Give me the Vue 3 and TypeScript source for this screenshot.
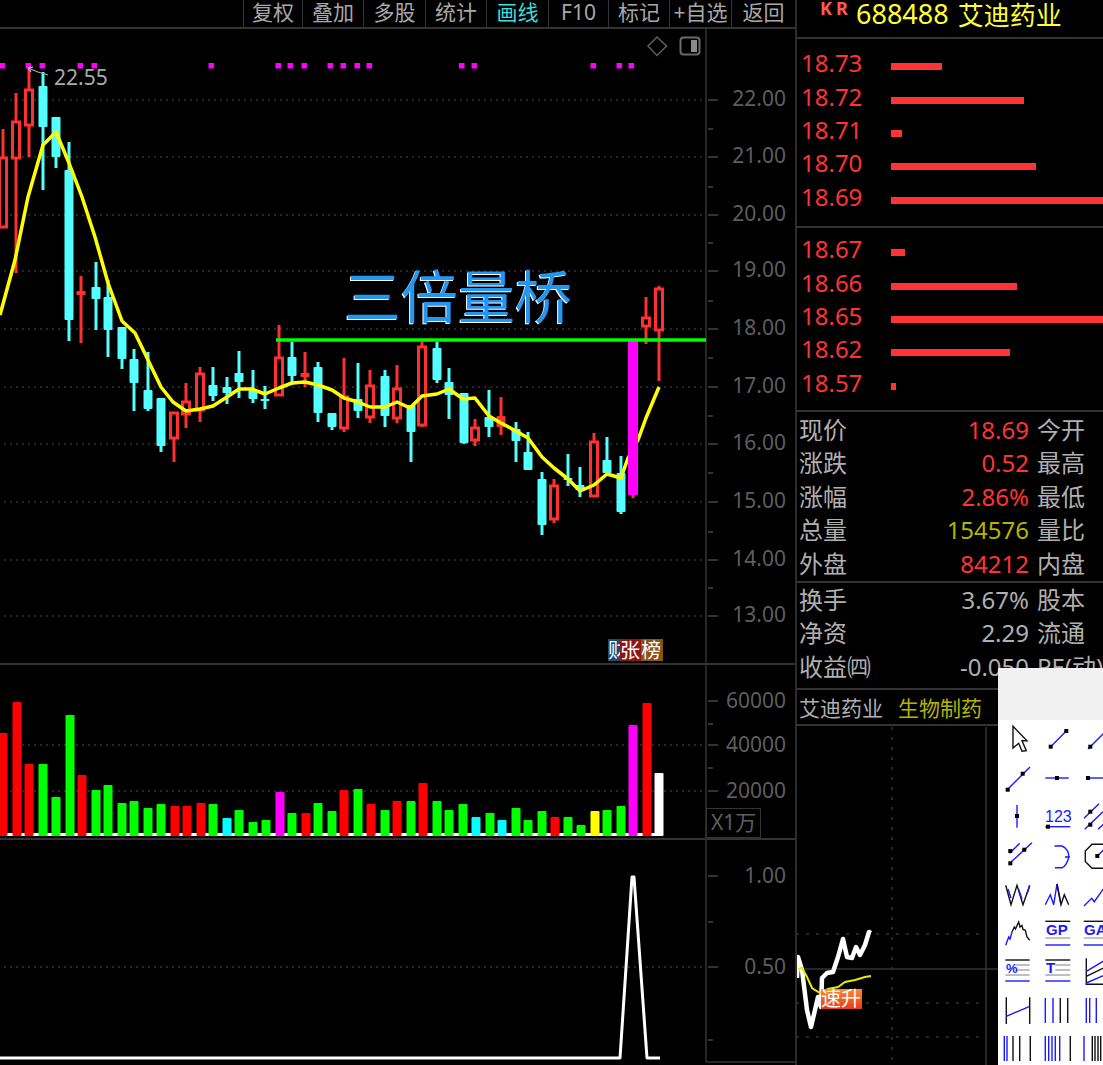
<script setup lang="ts">
type Candle = [number, 'c' | 'r' | 'f' | 'm', number, number, number, number];

const tools = [
  { label: '复权', on: false },
  { label: '叠加', on: false },
  { label: '多股', on: false },
  { label: '统计', on: false },
  { label: '画线', on: true },
  { label: 'F10', on: false },
  { label: '标记', on: false },
  { label: '+自选', on: false },
  { label: '返回', on: false },
];

// x, kind, high, body top, body bottom, low (all in page pixels)
const candles: Candle[] = [
  [3, 'r', 129, 158, 227, 227],
  [16, 'r', 93, 122, 158, 273],
  [29, 'r', 67, 90, 125, 157],
  [43, 'c', 72, 86, 127, 190],
  [56, 'c', 117, 117, 157, 168],
  [69, 'c', 142, 170, 320, 341],
  [81, 'f', 276, 291, 295, 343],
  [96, 'c', 262, 287, 299, 330],
  [108, 'c', 280, 297, 330, 357],
  [122, 'c', 327, 327, 359, 369],
  [134, 'c', 349, 359, 383, 411],
  [148, 'c', 352, 390, 409, 411],
  [161, 'c', 398, 398, 446, 452],
  [174, 'r', 413, 413, 438, 462],
  [186, 'r', 383, 402, 414, 428],
  [200, 'r', 367, 374, 410, 422],
  [213, 'c', 367, 385, 396, 401],
  [227, 'c', 377, 387, 393, 404],
  [239, 'c', 351, 373, 382, 398],
  [253, 'c', 370, 390, 399, 403],
  [265, 'c', 386, 399, 401, 409],
  [279, 'r', 325, 358, 395, 395],
  [292, 'c', 342, 357, 376, 385],
  [305, 'f', 352, 373, 377, 387],
  [318, 'c', 362, 367, 413, 422],
  [332, 'c', 413, 413, 427, 430],
  [344, 'r', 358, 397, 428, 432],
  [358, 'c', 363, 399, 411, 418],
  [370, 'r', 370, 386, 417, 423],
  [385, 'c', 370, 376, 416, 427],
  [397, 'r', 365, 389, 418, 423],
  [411, 'c', 405, 405, 432, 462],
  [422, 'r', 342, 347, 425, 427],
  [437, 'c', 342, 348, 380, 383],
  [449, 'c', 368, 382, 395, 419],
  [464, 'c', 393, 393, 443, 444],
  [475, 'r', 419, 428, 440, 446],
  [489, 'c', 390, 417, 427, 437],
  [501, 'f', 397, 416, 427, 435],
  [516, 'c', 422, 429, 441, 462],
  [528, 'c', 432, 452, 470, 470],
  [542, 'c', 472, 479, 525, 535],
  [554, 'r', 479, 486, 519, 523],
  [568, 'c', 454, 478, 480, 486],
  [580, 'c', 467, 485, 490, 497],
  [594, 'r', 433, 442, 496, 496],
  [607, 'c', 437, 460, 473, 473],
  [621, 'c', 456, 473, 512, 514],
  [633, 'm', 340, 340, 495, 498],
  [646, 'r', 297, 318, 326, 344],
  [659, 'r', 286, 289, 330, 381],
];

const maLine = [
  [0, 315], [15, 260], [28, 197], [43, 145], [56, 132], [69, 163], [82, 197], [95, 237], [108, 283], [122, 321],
  [135, 333], [148, 360], [161, 387], [173, 402], [186, 411], [200, 409], [213, 406], [227, 397], [239, 389],
  [252, 389], [265, 394], [279, 388], [292, 383], [305, 382], [318, 385], [332, 390], [344, 398], [358, 402],
  [370, 407], [385, 407], [397, 402], [410, 408], [422, 396], [437, 394], [449, 389], [463, 399], [475, 398],
  [489, 416], [501, 423], [516, 431], [528, 438], [542, 457], [554, 468], [568, 479], [580, 491], [594, 485],
  [607, 474], [621, 478], [628, 458], [638, 440], [646, 418], [659, 387],
].map((p) => p.join(',')).join(' ');

const markers = [2, 28, 42, 80, 94, 211, 278, 290, 304, 330, 343, 357, 369, 461.5, 474, 593, 619, 631];

const priceGrid = [100, 157, 215, 271, 329, 387, 444, 502, 560, 616];
const priceLabels = ['22.00', '21.00', '20.00', '19.00', '18.00', '17.00', '16.00', '15.00', '14.00', '13.00'];
const priceMinor = [129, 187, 243, 301, 358, 416, 473, 532, 588];

const volumes: [number, number, string][] = [
  [3, 733, '#ff0000'], [17, 702, '#ff0000'], [29, 764, '#ff0000'], [43, 764, '#00ff00'], [56, 797, '#00ff00'],
  [70, 715, '#00ff00'], [82, 775, '#ff0000'], [96, 790, '#00ff00'], [108, 785, '#00ff00'], [122, 803, '#00ff00'],
  [134, 801, '#00ff00'], [148, 808, '#00ff00'], [161, 804, '#00ff00'], [175, 806, '#ff0000'], [187, 806, '#ff0000'],
  [201, 803, '#ff0000'], [213, 804, '#00ff00'], [227, 818, '#00ffff'], [239, 810, '#00ff00'], [253, 822, '#00ff00'],
  [266, 820, '#00ff00'], [280, 792, '#ff00ff'], [292, 813, '#00ff00'], [306, 813, '#ff0000'], [318, 803, '#00ff00'],
  [332, 811, '#00ff00'], [344, 790, '#ff0000'], [358, 789, '#00ff00'], [371, 804, '#ff0000'], [385, 810, '#00ff00'],
  [397, 801, '#ff0000'], [411, 801, '#00ff00'], [423, 783, '#ff0000'], [437, 801, '#00ff00'], [449, 810, '#00ff00'],
  [463, 804, '#00ff00'], [476, 817, '#00ffff'], [490, 813, '#00ff00'], [502, 820, '#00ffff'], [516, 808, '#00ff00'],
  [528, 820, '#00ff00'], [542, 811, '#00ff00'], [555, 817, '#ff0000'], [568, 817, '#00ff00'], [581, 825, '#00ff00'],
  [595, 811, '#ffff00'], [607, 810, '#00ff00'], [621, 806, '#00ff00'], [633, 725, '#ff00ff'], [647, 703, '#ff0000'],
  [659, 773, '#ffffff'],
];

const asks = [
  { price: '18.73', width: 51 },
  { price: '18.72', width: 133 },
  { price: '18.71', width: 11 },
  { price: '18.70', width: 145 },
  { price: '18.69', width: 212 },
];
const bids = [
  { price: '18.67', width: 14 },
  { price: '18.66', width: 126 },
  { price: '18.65', width: 212 },
  { price: '18.62', width: 119 },
  { price: '18.57', width: 5 },
];

const quote = [
  { name: '现价', value: '18.69', tone: 'up', tail: '今开' },
  { name: '涨跌', value: '0.52', tone: 'up', tail: '最高' },
  { name: '涨幅', value: '2.86%', tone: 'up', tail: '最低' },
  { name: '总量', value: '154576', tone: 'olive', tail: '量比' },
  { name: '外盘', value: '84212', tone: 'up', tail: '内盘' },
];
const finance = [
  { name: '换手', value: '3.67%', tail: '股本' },
  { name: '净资', value: '2.29', tail: '流通' },
  { name: '收益㈣', value: '-0.050', tail: 'PE(动)' },
];

const miniWhite = '797,978 798,957 802,970 807,1010 811,1027 815,1010 818,997 821,1007 822,978 827,973 833,972 838,957 843,939 847,957 852,958 856,947 860,955 865,945 869,932 871,933';
const miniYellow = '798,969 802,968 807,977 812,988 820,993 828,989 838,987 845,982 855,980 865,977 871,976';

type Seg = { c: 'b' | 'k' | 'g'; d: string };
type Icon = {
  segs: Seg[];
  dots?: [number, number][];
  text?: { t: string; x: number; y: number; size: number; bold?: boolean };
};

const bars = (c: Seg['c'], xs: number[], top = 8, bottom = 33): Seg => ({
  c,
  d: xs.map((x) => `M${x} ${top}V${bottom}`).join(''),
});
const textLines = (x0: number, x1: number): Seg[] => [
  { c: 'k', d: `M${x0} 9H${x1}` },
  { c: 'g', d: `M${x0 + 10} 14H${x1}M${x0 + 10} 19H${x1}M${x0} 24H${x1}` },
  { c: 'b', d: `M${x0} 30H${x1}` },
];

const icons: Icon[] = [
  { segs: [{ c: 'k', d: 'M15 6.3L29 20.7H24L28.3 30.7 24 31.3 20.7 23.3 15 28Z' }] },
  { segs: [{ c: 'b', d: 'M12.7 26.7L28.3 11' }], dots: [[12.7, 26.7], [28.3, 11]] },
  { segs: [{ c: 'b', d: 'M14 29L33 10' }], dots: [[16.3, 26.7]] },

  { segs: [{ c: 'b', d: 'M9 31L32 8' }], dots: [[9.7, 30.7], [24.7, 14.7]] },
  { segs: [{ c: 'b', d: 'M7.3 19H30.7' }], dots: [[19, 19]] },
  { segs: [{ c: 'b', d: 'M14 19H38' }], dots: [[14, 19]] },

  { segs: [{ c: 'b', d: 'M19 8V30.7' }], dots: [[19, 19]] },
  { segs: [{ c: 'b', d: 'M7.3 29.7H32.3' }], dots: [[10, 29.7]], text: { t: '123', x: 7, y: 25, size: 16 } },
  { segs: [{ c: 'b', d: 'M10 21.3L25 6.7M10.7 32.3L29 14.7M24 32.3L32 25' }], dots: [[16.3, 14.7], [16.3, 27.7]] },

  { segs: [{ c: 'b', d: 'M11.7 17.3L21.7 7.3M11.7 27.3L34 6.7' }], dots: [[12.3, 15], [12.3, 27.3], [26.3, 13.7]] },
  { segs: [{ c: 'b', d: 'M16.5 10H24C29 12 31 17 30.7 20.7 30 26 27 31 24 31.7H17M27 21H32' }] },
  {
    segs: [
      { c: 'k', d: 'M38 8.3H18L11.3 15V25.5L18 32.3H38' },
      { c: 'b', d: 'M23.3 20L38 6' },
    ],
    dots: [[23.3, 20]],
  },

  {
    segs: [
      { c: 'k', d: 'M7.7 11.3L13 30.7 19 11.3 25 30.7 31.7 11.3' },
      { c: 'b', d: 'M10 15L13 24M20.5 15L24 25M29 20L31.7 12' },
    ],
  },
  {
    segs: [
      { c: 'b', d: 'M7.3 30.7L12.3 20.7 15.7 30.7 19 10 23 30.7' },
      { c: 'k', d: 'M19 10L23 30.7 26.3 20.7 30.7 30.7' },
    ],
  },
  { segs: [{ c: 'b', d: 'M10 32L17.7 24.3 20.3 27.7 30 14 38 8' }] },

  {
    segs: [
      { c: 'b', d: 'M7.7 32.3L10.7 24 12 26 14 19' },
      { c: 'k', d: 'M14 19L16.3 14 17.5 16 20.7 9 22 14 24 12.5 25 16.5 27.3 17.3 29 24 31.7 27.3' },
    ],
  },
  {
    segs: [
      { c: 'k', d: 'M7.3 8.3H32.3' },
      { c: 'g', d: 'M7.3 25H32.3' },
      { c: 'b', d: 'M7.3 32H32.3' },
    ],
    text: { t: 'GP', x: 8, y: 22, size: 15, bold: true },
  },
  {
    segs: [
      { c: 'k', d: 'M9.7 8.3H38' },
      { c: 'g', d: 'M9.7 25H38' },
      { c: 'b', d: 'M9.7 32H38' },
    ],
    text: { t: 'GA', x: 10, y: 22, size: 15, bold: true },
  },

  { segs: textLines(7.3, 31.7), text: { t: '%', x: 8, y: 22, size: 13, bold: true } },
  { segs: textLines(7.3, 32.3), text: { t: 'T', x: 8, y: 22, size: 15, bold: true } },
  {
    segs: [
      { c: 'k', d: 'M12.3 7.3V33.3H38M12.3 25.3L38 13' },
      { c: 'b', d: 'M12.3 20.3L38 5M12.3 32L38 21' },
    ],
  },

  {
    segs: [
      { c: 'k', d: 'M8.3 7.3V34M31.7 7.3V34' },
      { c: 'b', d: 'M8.3 26.3L31.7 16.3' },
    ],
  },
  { segs: [bars('b', [7.3, 15]), bars('k', [22.3, 29.7])] },
  { segs: [bars('b', [12.3, 15.7, 22.3])] },

  { segs: [bars('b', [6.3, 9]), bars('k', [15, 21.7, 32.3])] },
  { segs: [bars('b', [7.3, 10.7, 14, 17.3, 21.7]), bars('k', [32.3])] },
  { segs: [bars('b', [10]), bars('k', [18.3, 21, 24, 26.7])] },
];
</script>

<template>
  <div class="app">
    <div class="left">
      <div class="toolbar">
        <div class="tool-gap"></div>
        <div v-for="t in tools" :key="t.label" class="tool" :class="{ on: t.on }">{{ t.label }}</div>
      </div>

      <div class="pane pane-main">
        <svg class="chart" width="795" height="634" viewBox="0 29 795 634">
          <g class="grid">
            <line v-for="y in priceGrid" :key="y" x1="4" x2="702" :y1="y" :y2="y" />
          </g>
          <line class="axis" x1="706" x2="706" y1="29" y2="663" />
          <g class="ticks">
            <line v-for="y in priceGrid" :key="y" x1="708" x2="718" :y1="y" :y2="y" />
            <line v-for="y in priceMinor" :key="y" x1="708" x2="713" :y1="y" :y2="y" />
          </g>
          <text v-for="(l, i) in priceLabels" :key="l" class="axis-text" x="786" :y="priceGrid[i] + 6">{{ l }}</text>

          <rect v-for="x in markers" :key="x" class="marker" :x="x - 2.5" y="63" width="5.5" height="5.5" />

          <template v-for="c in candles" :key="c[0]">
            <g :class="['candle', 'k-' + c[1]]">
              <line :x1="c[0]" :x2="c[0]" :y1="c[2]" :y2="c[3]" />
              <line :x1="c[0]" :x2="c[0]" :y1="c[4]" :y2="c[5]" />
              <rect v-if="c[1] === 'r'" :x="c[0] - 3.5" :y="c[3]" width="7" :height="c[4] - c[3]" />
              <rect v-else :x="c[0] - 4.5" :y="c[3]" width="9" :height="Math.max(c[4] - c[3], 2)" rx="1" />
            </g>
          </template>

          <polyline class="ma" :points="maLine" />
          <rect class="marker" x="628" y="340" width="10" height="155" rx="1" />
          <line class="bridge" x1="276" x2="706" y1="340" y2="340" />

          <path class="peak-arrow" d="M48 75L38 72 28 68M28 68L33 67M28 68L31 72" />
          <text class="peak-text" x="54" y="85">22.55</text>

          <path class="diamond" d="M657 37L666.5 46 657 55.5 648 46Z" />
          <rect class="panel-btn" x="680.5" y="37.5" width="19" height="17" rx="3" />
          <rect class="panel-fill" x="691" y="40" width="6" height="12" />
        </svg>
        <div class="big-title">三倍量桥</div>
        <div class="tag">
          <span class="tag-a">财</span>
          <span class="tag-b">张</span>
          <span class="tag-c">榜</span>
        </div>
      </div>

      <div class="pane pane-vol">
        <svg class="chart" width="795" height="173" viewBox="0 665 795 173">
          <g class="grid">
            <line x1="22" x2="702" y1="745" y2="745" />
            <line x1="4" x2="702" y1="791" y2="791" />
          </g>
          <line class="axis" x1="706" x2="706" y1="665" y2="838" />
          <g class="ticks">
            <line x1="708" x2="718" y1="701" y2="701" />
            <line x1="708" x2="718" y1="745" y2="745" />
            <line x1="708" x2="718" y1="791" y2="791" />
            <line x1="708" x2="713" y1="724" y2="724" />
            <line x1="708" x2="713" y1="768" y2="768" />
          </g>
          <text class="axis-text" x="786" y="708">60000</text>
          <text class="axis-text" x="786" y="752">40000</text>
          <text class="axis-text" x="786" y="798">20000</text>
          <rect class="unit-box" x="706.5" y="808.5" width="54" height="29" />
          <text class="unit-text" x="711" y="830">X1万</text>
          <rect class="vol-base" x="0" y="833" width="663" height="3" />
          <rect v-for="v in volumes" :key="v[0]" :x="v[0] - 4.5" :y="v[1]" width="9" :height="836 - v[1]" rx="1" :fill="v[2]" />
        </svg>
      </div>

      <div class="pane pane-sig">
        <svg class="chart" width="795" height="225" viewBox="0 840 795 225">
          <g class="grid">
            <line x1="4" x2="702" y1="967" y2="967" />
          </g>
          <line class="axis" x1="706" x2="706" y1="840" y2="1062" />
          <line class="axis" x1="706" x2="795" y1="1062" y2="1062" />
          <g class="ticks">
            <line x1="708" x2="718" y1="876" y2="876" />
            <line x1="708" x2="718" y1="967" y2="967" />
            <line x1="708" x2="713" y1="922" y2="922" />
            <line x1="708" x2="713" y1="1040" y2="1040" />
          </g>
          <text class="axis-text" x="786" y="883">1.00</text>
          <text class="axis-text" x="786" y="974">0.50</text>
          <polyline class="signal" points="0,1058 620,1058 632,877 634,877 647,1058 660,1058" />
        </svg>
      </div>
    </div>

    <div class="right">
      <div class="head">
        <span class="kr">KR</span>
        <span class="code">688488</span>
        <span class="name">艾迪药业</span>
      </div>

      <div class="book asks">
        <div v-for="a in asks" :key="a.price" class="book-row">
          <span class="book-price">{{ a.price }}</span>
          <span class="book-bar" :style="{ width: a.width + 'px' }"></span>
        </div>
      </div>
      <div class="book bids">
        <div v-for="b in bids" :key="b.price" class="book-row">
          <span class="book-price">{{ b.price }}</span>
          <span class="book-bar" :style="{ width: b.width + 'px' }"></span>
        </div>
      </div>

      <div class="stats quote">
        <div v-for="q in quote" :key="q.name" class="stat-row">
          <span>{{ q.name }}</span>
          <span class="val" :class="q.tone">{{ q.value }}</span>
          <span>{{ q.tail }}</span>
        </div>
      </div>
      <div class="stats finance">
        <div v-for="f in finance" :key="f.name" class="stat-row">
          <span>{{ f.name }}</span>
          <span class="val">{{ f.value }}</span>
          <span>{{ f.tail }}</span>
        </div>
      </div>

      <div class="sector">
        <span>艾迪药业</span>
        <span class="olive">生物制药</span>
      </div>

      <svg class="mini" width="306" height="339" viewBox="797 726 306 339">
        <defs>
          <linearGradient id="riseFill" x1="0" y1="0" x2="0" y2="1">
            <stop offset="0" stop-color="#ff8a30" />
            <stop offset="1" stop-color="#e83a18" />
          </linearGradient>
        </defs>
        <line class="mini-dot" x1="892" x2="892" y1="727" y2="1065" />
        <line class="mini-solid" x1="986" x2="986" y1="727" y2="1065" />
        <line class="mini-solid" x1="796" x2="1000" y1="969" y2="969" />
        <line class="mini-dot" x1="796" x2="986" y1="934" y2="934" />
        <line class="mini-dot" x1="796" x2="986" y1="1003" y2="1003" />
        <line class="mini-dot" x1="796" x2="986" y1="1037" y2="1037" />
        <polyline class="mini-white" :points="miniWhite" />
        <polyline class="mini-yellow" :points="miniYellow" />
        <rect x="821" y="989" width="41" height="20" fill="url(#riseFill)" />
        <text class="mini-tag" x="821" y="1006">速升</text>
      </svg>
    </div>

    <div class="toolbox">
      <div class="toolbox-title"></div>
      <div class="toolbox-grid">
        <svg v-for="(ic, i) in icons" :key="i" class="tool-icon" width="38" height="38" viewBox="0 0 38 38">
          <path v-for="(s, j) in ic.segs" :key="j" :class="['seg', 'seg-' + s.c]" :d="s.d" />
          <rect v-for="(d, j) in ic.dots" :key="j" class="dot" :x="d[0] - 2" :y="d[1] - 2" width="4" height="4" />
          <text
            v-if="ic.text"
            class="ic-text"
            :class="{ bold: ic.text.bold }"
            :x="ic.text.x"
            :y="ic.text.y"
            :font-size="ic.text.size"
          >{{ ic.text.t }}</text>
        </svg>
      </div>
    </div>
  </div>
</template>

<style>
html,
body {
  margin: 0;
  background: #000;
  overflow: hidden;
}
</style>

<style scoped>
.app {
  position: relative;
  display: grid;
  grid-template-columns: 795px 308px;
  width: 1103px;
  height: 1065px;
  overflow: hidden;
  background: #000;
  font-family: "Noto Sans", "Noto Sans CJK SC", sans-serif;
}

.left {
  display: flex;
  flex-direction: column;
  min-width: 0;
}

.toolbar {
  display: grid;
  grid-template-columns: 243px 59px 61px 62px 61px 62px 60px 61px 62px 1fr;
  height: 29px;
  box-sizing: border-box;
  border-bottom: 2px solid #333;
}

.tool {
  box-sizing: border-box;
  border-left: 1px solid #333;
  color: #a8a8a8;
  font-size: 21px;
  line-height: 24px;
  text-align: center;
  white-space: nowrap;
}

.tool.on {
  color: #3fdcdc;
}

.pane {
  position: relative;
}

.pane-main {
  height: 634px;
}

.pane-vol {
  height: 175px;
  border-top: 2px solid #333;
  box-sizing: border-box;
}

.pane-sig {
  flex: 1;
  border-top: 2px solid #333;
  box-sizing: border-box;
}

.chart {
  display: block;
}

.grid line {
  stroke: #333;
  stroke-width: 1.4;
  stroke-dasharray: 2 4;
}

.axis {
  stroke: #333;
  stroke-width: 1.5;
}

.ticks line {
  stroke: #444;
  stroke-width: 1.5;
}

.axis-text {
  fill: #5e5e5e;
  font-size: 21px;
  text-anchor: end;
}

.marker {
  fill: #ff00ff;
}

.candle line {
  stroke-width: 3;
}

.k-c line {
  stroke: #54ffff;
}

.k-c rect {
  fill: #54ffff;
}

.k-r line,
.k-f line,
.k-m line {
  stroke: #ff3030;
}

.k-r rect {
  fill: #000;
  stroke: #ff3030;
  stroke-width: 3;
}

.k-f rect {
  fill: #ff3030;
}

.k-m rect {
  fill: #ff00ff;
}

.ma {
  fill: none;
  stroke: #ffff00;
  stroke-width: 3.5;
  stroke-linejoin: round;
}

.bridge {
  stroke: #00ff00;
  stroke-width: 3.5;
}

.peak-arrow {
  fill: none;
  stroke: #aaa;
  stroke-width: 1.3;
}

.peak-text {
  fill: #aaa;
  font-size: 21px;
}

.diamond {
  fill: none;
  stroke: #5e5e5e;
  stroke-width: 1.5;
}

.panel-btn {
  fill: none;
  stroke: #6a6a6a;
  stroke-width: 2;
}

.panel-fill {
  fill: #8a8a8a;
}

.big-title {
  position: absolute;
  left: 344px;
  top: 232px;
  color: #2196f3;
  font-size: 57px;
  line-height: 64px;
  white-space: nowrap;
  font-family: "Noto Sans CJK SC", sans-serif;
  text-shadow: -1px 1px 0 #fff;
}

.tag {
  position: absolute;
  left: 608px;
  top: 610px;
  display: flex;
  height: 22px;
  color: #fff;
  font-size: 20px;
  line-height: 22px;
  font-family: "Noto Sans CJK SC", sans-serif;
}

.tag span {
  display: block;
  overflow: hidden;
}

.tag-a {
  width: 12px;
  background: #1d4a78;
}

.tag-b {
  width: 21px;
  background: #8a1616;
}

.tag-c {
  width: 22px;
  background: #8c5212;
}

.unit-box {
  fill: none;
  stroke: #333;
}

.unit-text {
  fill: #5e5e5e;
  font-size: 21px;
}

.vol-base {
  fill: #fff;
}

.signal {
  fill: none;
  stroke: #fff;
  stroke-width: 3;
  stroke-linejoin: round;
}

.right {
  display: flex;
  flex-direction: column;
  border-left: 2px solid #2c2c2c;
  box-sizing: border-box;
  min-width: 0;
  overflow: hidden;
}

.head {
  display: flex;
  align-items: flex-start;
  height: 39px;
  flex: none;
  padding-left: 23px;
  box-sizing: border-box;
  border-bottom: 2px solid #333;
  white-space: nowrap;
}

.kr {
  margin-top: -3px;
  width: 36px;
  color: #ff5a5a;
  font-size: 18px;
  line-height: 22px;
  font-weight: 700;
  letter-spacing: 4px;
}

.code {
  color: #ffff33;
  font-size: 27px;
  line-height: 28px;
}

.name {
  margin-left: 9px;
  color: #ffff33;
  font-size: 26px;
  line-height: 30px;
}

.book {
  flex: none;
  box-sizing: border-box;
  border-bottom: 2px solid #333;
}

.asks {
  height: 189px;
  padding-top: 7px;
}

.bids {
  height: 184px;
  padding-top: 4px;
}

.book-row {
  display: flex;
  align-items: center;
  height: 33.4px;
  padding-left: 4px;
}

.book-price {
  width: 90px;
  flex: none;
  color: #ff3333;
  font-size: 24px;
  line-height: 33px;
}

.book-bar {
  display: block;
  height: 7px;
  margin-top: 8px;
  flex: none;
  background: #ff3333;
}

.stats {
  flex: none;
  box-sizing: border-box;
  border-bottom: 2px solid #333;
  color: #b0b0b0;
  font-size: 24px;
}

.quote {
  height: 171px;
  padding-top: 1px;
}

.finance {
  height: 107px;
}

.stat-row {
  display: grid;
  grid-template-columns: 70px 152px 80px;
  column-gap: 8px;
  height: 33.4px;
  padding-left: 2px;
  line-height: 33px;
  white-space: nowrap;
}

.val {
  text-align: right;
}

.up {
  color: #ff3333;
}

.olive {
  color: #b5b500;
}

.sector {
  display: flex;
  gap: 15px;
  flex: none;
  height: 36px;
  padding-left: 2px;
  box-sizing: border-box;
  border-bottom: 2px solid #333;
  color: #b0b0b0;
  font-size: 21px;
  line-height: 36px;
}

.mini {
  display: block;
  flex: none;
}

.mini-dot {
  stroke: #333;
  stroke-width: 1.5;
  stroke-dasharray: 3 7;
}

.mini-solid {
  stroke: #333;
  stroke-width: 1.5;
}

.mini-white {
  fill: none;
  stroke: #fff;
  stroke-width: 4.5;
  stroke-linejoin: round;
}

.mini-yellow {
  fill: none;
  stroke: #e8e800;
  stroke-width: 2;
}

.mini-tag {
  fill: #fff;
  font-size: 20px;
}

.toolbox {
  position: absolute;
  left: 998px;
  top: 668px;
  width: 120px;
  height: 400px;
  background: #fff;
  border-radius: 4px 0 0 0;
}

.toolbox-title {
  height: 52px;
  background: #f1f1f1;
}

.toolbox-grid {
  display: grid;
  grid-template-columns: 40px 36px 38px;
  grid-auto-rows: 38.5px;
}

.tool-icon {
  display: block;
  overflow: visible;
}

.seg {
  fill: none;
  stroke-width: 1.4;
}

.seg-b {
  stroke: #1a1aff;
}

.seg-k {
  stroke: #111;
}

.seg-g {
  stroke: #aaa;
}

.dot {
  fill: #000;
}

.ic-text {
  fill: #1a1aff;
  font-family: "Liberation Sans", sans-serif;
}

.ic-text.bold {
  font-weight: 700;
}
</style>
